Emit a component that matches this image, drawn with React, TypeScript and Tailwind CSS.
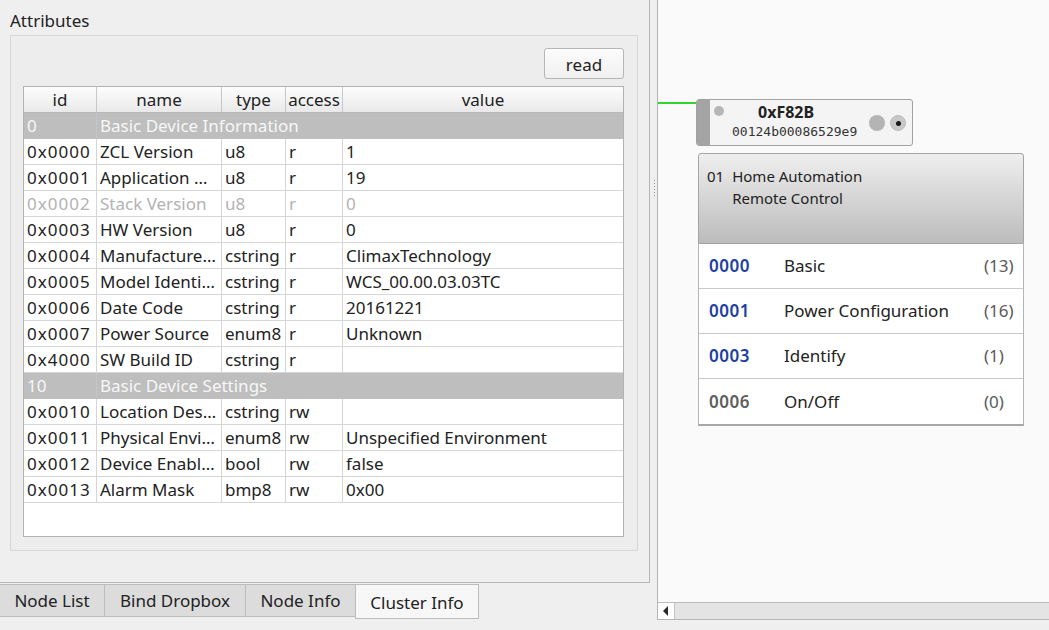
import React from 'react';

type Row = { g?: boolean; dis?: boolean; id: string; name: string; type?: string; access?: string; value?: string };

const rows: Row[] = [
  { g: true, id: '0', name: 'Basic Device Information' },
  { id: '0x0000', name: 'ZCL Version', type: 'u8', access: 'r', value: '1' },
  { id: '0x0001', name: 'Application …', type: 'u8', access: 'r', value: '19' },
  { id: '0x0002', name: 'Stack Version', type: 'u8', access: 'r', value: '0', dis: true },
  { id: '0x0003', name: 'HW Version', type: 'u8', access: 'r', value: '0' },
  { id: '0x0004', name: 'Manufacture…', type: 'cstring', access: 'r', value: 'ClimaxTechnology' },
  { id: '0x0005', name: 'Model Identi…', type: 'cstring', access: 'r', value: 'WCS_00.00.03.03TC' },
  { id: '0x0006', name: 'Date Code', type: 'cstring', access: 'r', value: '20161221' },
  { id: '0x0007', name: 'Power Source', type: 'enum8', access: 'r', value: 'Unknown' },
  { id: '0x4000', name: 'SW Build ID', type: 'cstring', access: 'r', value: '' },
  { g: true, id: '10', name: 'Basic Device Settings' },
  { id: '0x0010', name: 'Location Des…', type: 'cstring', access: 'rw', value: '' },
  { id: '0x0011', name: 'Physical Envi…', type: 'enum8', access: 'rw', value: 'Unspecified Environment' },
  { id: '0x0012', name: 'Device Enabl…', type: 'bool', access: 'rw', value: 'false' },
  { id: '0x0013', name: 'Alarm Mask', type: 'bmp8', access: 'rw', value: '0x00' },
];

const clusters = [
  { id: '0000', name: 'Basic', count: '(13)', active: true },
  { id: '0001', name: 'Power Configuration', count: '(16)', active: true },
  { id: '0003', name: 'Identify', count: '(1)', active: true },
  { id: '0006', name: 'On/Off', count: '(0)', active: false },
];

const cell = 'h-[26px] border-b border-[#d6d6d6] px-[3px] leading-[25px] whitespace-nowrap overflow-hidden';

function AttrTable() {
  return (
    <div className="w-[601px] h-[451px] border border-[#b2b2b2] bg-white flex flex-col">
      <div className="grid grid-cols-[73px_125px_64px_57px_1fr] h-[26px] border-b border-[#b8b8b8] bg-gradient-to-b from-[#fdfdfd] to-[#e9e9e9] text-center leading-[25px]">
        <div className="border-r border-[#c8c8c8]">id</div>
        <div className="border-r border-[#c8c8c8]">name</div>
        <div className="border-r border-[#c8c8c8]">type</div>
        <div className="border-r border-[#c8c8c8]">access</div>
        <div>value</div>
      </div>
      {rows.map((r, i) =>
        r.g ? (
          <div key={i} className="grid grid-cols-[73px_1fr] bg-[#bebebe] text-[#f7f7f7]">
            <div className={cell + ' border-r border-r-[#c6c6c6] border-b-[#bebebe]'}>{r.id}</div>
            <div className={cell + ' border-b-[#bebebe]'}>{r.name}</div>
          </div>
        ) : (
          <div
            key={i}
            className={
              'grid grid-cols-[73px_125px_64px_57px_1fr] ' + (r.dis ? 'text-[#b2b2b2]' : 'text-[#222]')
            }
          >
            <div className={cell + ' border-r tracking-[1px]'}>{r.id}</div>
            <div className={cell + ' border-r'}>{r.name}</div>
            <div className={cell + ' border-r'}>{r.type}</div>
            <div className={cell + ' border-r'}>{r.access}</div>
            <div className={cell}>{r.value}</div>
          </div>
        )
      )}
    </div>
  );
}

function Tabs() {
  return (
    <div className="flex items-start mt-[1px] text-[#222]">
      <div className="w-[105px] h-[33px] border-t border-b border-r border-[#bcbcbc] bg-[#dcdcdc] flex items-center justify-center leading-[22px]">
        Node List
      </div>
      <div className="w-[141px] h-[33px] border-t border-b border-r border-[#bcbcbc] bg-[#dcdcdc] flex items-center justify-center leading-[22px]">
        Bind Dropbox
      </div>
      <div className="w-[109px] h-[33px] border-t border-b border-[#bcbcbc] bg-[#dcdcdc] flex items-center justify-center leading-[22px]">
        Node Info
      </div>
      <div className="w-[124px] h-[35px] border border-[#bcbcbc] bg-[#f7f7f7] flex items-center justify-center leading-[22px] pt-[2px]">
        Cluster Info
      </div>
    </div>
  );
}

function NodeItem() {
  return (
    <div className="absolute left-[38px] top-[99px] w-[217px] h-[47px] flex rounded-[3px] border border-[#a2a2a2] bg-[#f4f4f4] overflow-hidden">
      <div className="w-[13px] bg-[#a4a4a4]" />
      <div className="relative flex-1">
        <div className="absolute left-[4px] top-[6px] w-[10px] h-[10px] rounded-full bg-[#b6b6b6]" />
        <div className="absolute left-[48px] top-[2px] text-[16px] leading-[20px] font-bold text-[#222]">0xF82B</div>
        <div className="absolute left-[22px] top-[24px] text-[13px] leading-[16px] font-['DejaVu_Sans_Mono',monospace] text-[#333]">
          00124b00086529e9
        </div>
        <div className="absolute left-[159px] top-[15px] w-[16px] h-[16px] rounded-full bg-[#b4b4b4]" />
        <div className="absolute left-[180px] top-[15px] w-[16px] h-[16px] rounded-full bg-[#c8c8c8] border border-[#bdbdbd] flex items-center justify-center">
          <div className="w-[5px] h-[5px] rounded-full bg-[#1a1a1a]" />
        </div>
      </div>
    </div>
  );
}

function Endpoint() {
  return (
    <div className="absolute left-[40px] top-[153px] w-[326px] flex flex-col">
      <div className="h-[91px] rounded-t-[3px] border border-[#a4a4a4] bg-gradient-to-b from-[#efefef] to-[#bcbcbc] flex pl-[8px] pt-[11px] gap-[8px] text-[15px] leading-[22px] text-[#222]">
        <div>01</div>
        <div className="flex flex-col">
          <div>Home Automation</div>
          <div>Remote Control</div>
        </div>
      </div>
      <div className="flex flex-col border-l border-r border-b-[2px] border-[#b4b4b4] border-b-[#a8a8a8] bg-white">
        {clusters.map((c, i) => (
          <div
            key={c.id}
            className={
              'h-[45px] flex items-center pl-[10px] ' + (i < clusters.length - 1 ? 'border-b border-[#c8c8c8]' : '')
            }
          >
            <div
              className={
                'w-[75px] font-semibold tracking-[0.5px] ' + (c.active ? 'text-[#1d3fa3]' : 'text-[#5e5e5e]')
              }
            >
              {c.id}
            </div>
            <div className="w-[200px] text-[#222]">{c.name}</div>
            <div className="text-[#5a5a5a]">{c.count}</div>
          </div>
        ))}
      </div>
    </div>
  );
}

export default function App() {
  return (
    <div className="w-[1049px] h-[630px] overflow-hidden bg-[#efefef] flex font-['Noto_Sans',sans-serif] text-[17px] text-[#222]">
      {/* left tab widget */}
      <div className="w-[650px] flex flex-col">
        <div className="h-[583px] border-r border-b border-[#b6b6b6] flex flex-col pt-[9px]">
          <div className="pl-[10px] h-[23px] leading-[23px]">Attributes</div>
          <div className="ml-[10px] mt-[3px] w-[628px] h-[516px] border border-[#d6d6d6] bg-[#ededed] flex flex-col pt-[12px] pl-[12px] pr-[13px]">
            <div className="flex justify-end">
              <div className="w-[80px] h-[31px] rounded-[3px] border border-[#b6b6b6] bg-gradient-to-b from-[#fcfcfc] to-[#f0f0f0] flex items-center justify-center leading-[22px] pt-[2px]">
                read
              </div>
            </div>
            <div className="mt-[7px]">
              <AttrTable />
            </div>
          </div>
        </div>
        <Tabs />
      </div>

      {/* splitter */}
      <div className="w-[7px] flex flex-col items-center pt-[180px] pl-[1px]">
        <div className="flex flex-col gap-[2px]">
          <div className="w-[1px] h-[1px] bg-[#9c9c9c]" />
          <div className="w-[1px] h-[1px] bg-[#9c9c9c]" />
          <div className="w-[1px] h-[1px] bg-[#9c9c9c]" />
          <div className="w-[1px] h-[1px] bg-[#9c9c9c]" />
          <div className="w-[1px] h-[1px] bg-[#9c9c9c]" />
          <div className="w-[1px] h-[1px] bg-[#9c9c9c]" />
        </div>
      </div>

      {/* graphics view */}
      <div className="w-[392px] h-[620px] border-l border-b border-[#b4b4b4] bg-[#fafafa] flex flex-col">
        <div className="relative flex-1 overflow-hidden">
          <div className="absolute left-0 top-[102px] w-[39px] h-[2px] bg-[#2fd62f]" />
          <NodeItem />
          <Endpoint />
        </div>
        <div className="h-[17px] border-t border-[#bcbcbc] bg-[#e4e4e4] flex">
          <div className="w-[17px] h-[16px] bg-white border-r border-[#c4c4c4] flex items-center justify-center">
            <svg width="6" height="10" viewBox="0 0 6 10">
              <path d="M5 0 L0 5 L5 10 Z" fill="#2a2a2a" />
            </svg>
          </div>
        </div>
      </div>
    </div>
  );
}
